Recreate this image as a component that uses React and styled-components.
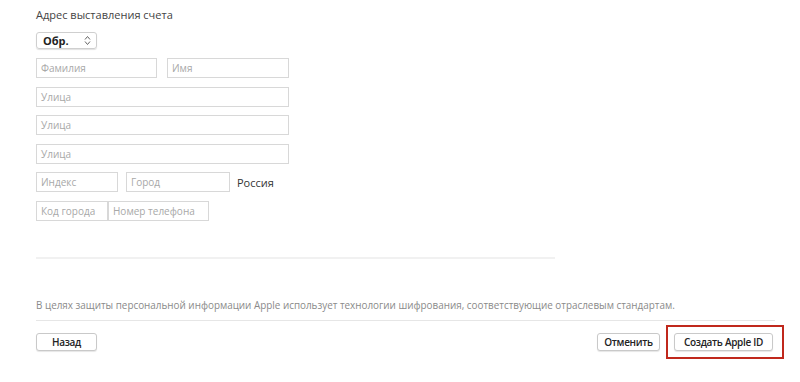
import React from "react";
import styled, { createGlobalStyle } from "styled-components";

const Global = createGlobalStyle`
  html, body { margin: 0; padding: 0; background: #ffffff; }
  body { font-family: "Open Sans", "Liberation Sans", sans-serif; }
`;

const Page = styled.main`
  width: 800px;
  height: 382px;
  box-sizing: border-box;
  padding: 8px 25px 0 36px;
  color: #333;
`;

const Title = styled.div`
  font-size: 11px;
  line-height: 14px;
  color: #444;
`;

const Select = styled.div`
  margin-top: 10px;
  width: 61px;
  height: 17px;
  box-sizing: border-box;
  border: 1px solid #cfcfcf;
  border-radius: 3px;
  box-shadow: 0 1px 1px rgba(0, 0, 0, 0.12);
  display: flex;
  align-items: center;
  justify-content: space-between;
  padding: 0 5px 0 6px;
  font-size: 11px;
  font-weight: 700;
  color: #222;
`;

const Rows = styled.div`
  margin-top: 9px;
  display: flex;
  flex-direction: column;
  gap: 8.6px;
`;

const Row = styled.div`
  display: flex;
  align-items: center;
  gap: ${(p) => p.gap ?? 0}px;
`;

const Field = styled.div`
  width: ${(p) => p.w}px;
  height: 20px;
  box-sizing: border-box;
  border: 1px solid #d8d8d8;
  font-size: 10px;
  line-height: 18px;
  padding-left: 4px;
  color: #a8a8a8;
`;

const Country = styled.span`
  font-size: 11px;
  color: #333;
  margin-left: -1px;
`;

const Rule = styled.div`
  height: 2px;
  background: #f1f1f1;
  width: ${(p) => p.w}px;
  margin-top: ${(p) => p.top}px;
`;

const Note = styled.div`
  margin-top: 39px;
  font-size: 9.9px;
  line-height: 14px;
  color: #8a8a8a;
`;

const ThinRule = styled.div`
  height: 1px;
  background: #e6e6e6;
  width: 739px;
  margin-top: 8px;
`;

const Footer = styled.div`
  margin-top: 12px;
  display: flex;
  align-items: center;
  justify-content: space-between;
  width: 737px;
`;

const Group = styled.div`
  display: flex;
  gap: 14px;
`;

const Button = styled.button`
  height: 18px;
  min-width: ${(p) => p.w}px;
  box-sizing: border-box;
  background: #fff;
  border: 1px solid #c9c9c9;
  border-radius: 3px;
  box-shadow: 0 1px 1px rgba(0, 0, 0, 0.1);
  font-family: "Open Sans", "Liberation Sans", sans-serif;
  font-size: 10px;
  font-weight: 600;
  letter-spacing: -0.3px;
  color: #222;
  padding: 0 6px;
`;

const Highlight = styled.span`
  position: relative;
  display: inline-flex;
  &::after {
    content: "";
    position: absolute;
    left: -8px;
    right: -11px;
    top: -8px;
    bottom: -8px;
    border: 2px solid #c0281c;
    pointer-events: none;
  }
`;

const Chevrons = () => (
  <svg width="7" height="11" viewBox="0 0 7 11">
    <path d="M1 4.5 L3.5 1.5 L6 4.5" fill="none" stroke="#666" strokeWidth="1" />
    <path d="M1 6.5 L3.5 9.5 L6 6.5" fill="none" stroke="#666" strokeWidth="1" />
  </svg>
);

export default function App() {
  return (
    <Page>
      <Global />
      <Title>Адрес выставления счета</Title>
      <Select>
        <span>Обр.</span>
        <Chevrons />
      </Select>
      <Rows>
        <Row gap={10}>
          <Field w={121}>Фамилия</Field>
          <Field w={122}>Имя</Field>
        </Row>
        <Row>
          <Field w={253}>Улица</Field>
        </Row>
        <Row>
          <Field w={253}>Улица</Field>
        </Row>
        <Row>
          <Field w={253}>Улица</Field>
        </Row>
        <Row gap={8}>
          <Field w={82}>Индекс</Field>
          <Field w={104}>Город</Field>
          <Country>Россия</Country>
        </Row>
        <Row>
          <Field w={72}>Код города</Field>
          <Field w={101}>Номер телефона</Field>
        </Row>
      </Rows>
      <Rule w={519} top={36} />
      <Note>
        В целях защиты персональной информации Apple использует технологии шифрования, соответствующие отраслевым стандартам.
      </Note>
      <ThinRule />
      <Footer>
        <Button w={61}>Назад</Button>
        <Group>
          <Button w={63}>Отменить</Button>
          <Highlight>
            <Button w={99}>Создать Apple ID</Button>
          </Highlight>
        </Group>
      </Footer>
    </Page>
  );
}
